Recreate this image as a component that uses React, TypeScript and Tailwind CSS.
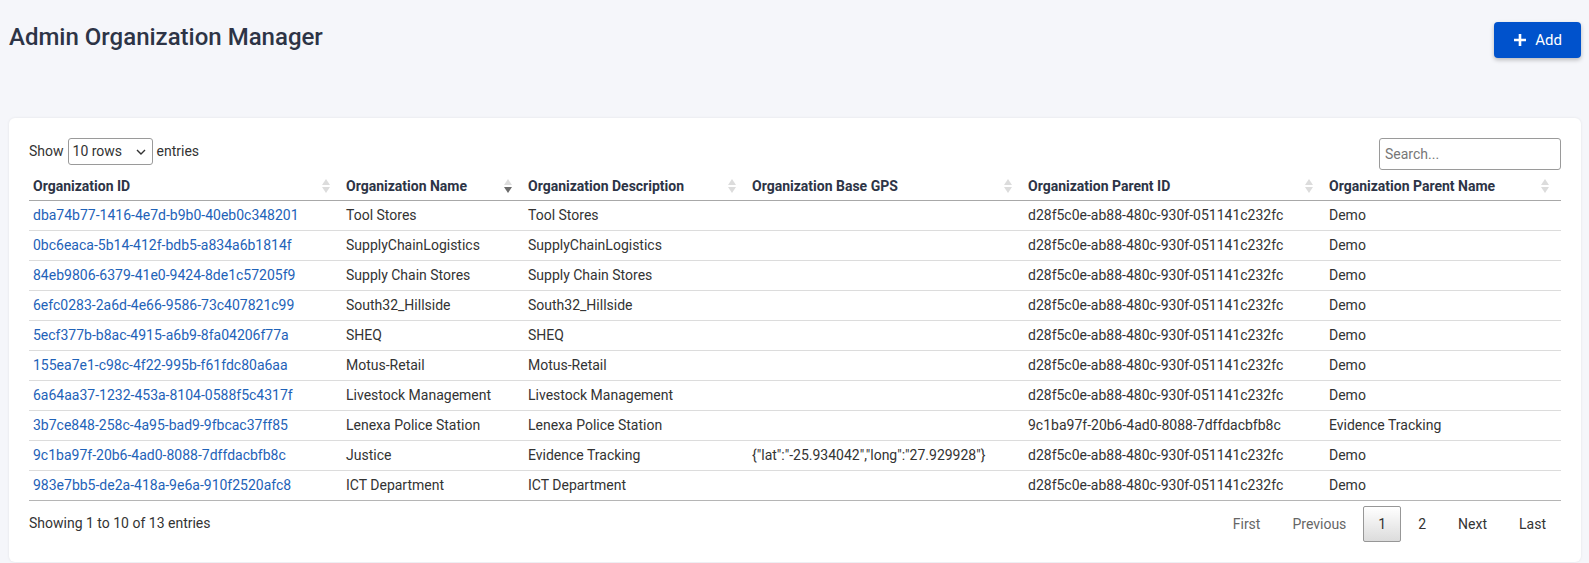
import React from 'react';

type Org = {
  id: string;
  name: string;
  description: string;
  gps: string;
  parentId: string;
  parentName: string;
};

const DEMO = 'd28f5c0e-ab88-480c-930f-051141c232fc';

const orgs: Org[] = [
  { id: 'dba74b77-1416-4e7d-b9b0-40eb0c348201', name: 'Tool Stores', description: 'Tool Stores', gps: '', parentId: DEMO, parentName: 'Demo' },
  { id: '0bc6eaca-5b14-412f-bdb5-a834a6b1814f', name: 'SupplyChainLogistics', description: 'SupplyChainLogistics', gps: '', parentId: DEMO, parentName: 'Demo' },
  { id: '84eb9806-6379-41e0-9424-8de1c57205f9', name: 'Supply Chain Stores', description: 'Supply Chain Stores', gps: '', parentId: DEMO, parentName: 'Demo' },
  { id: '6efc0283-2a6d-4e66-9586-73c407821c99', name: 'South32_Hillside', description: 'South32_Hillside', gps: '', parentId: DEMO, parentName: 'Demo' },
  { id: '5ecf377b-b8ac-4915-a6b9-8fa04206f77a', name: 'SHEQ', description: 'SHEQ', gps: '', parentId: DEMO, parentName: 'Demo' },
  { id: '155ea7e1-c98c-4f22-995b-f61fdc80a6aa', name: 'Motus-Retail', description: 'Motus-Retail', gps: '', parentId: DEMO, parentName: 'Demo' },
  { id: '6a64aa37-1232-453a-8104-0588f5c4317f', name: 'Livestock Management', description: 'Livestock Management', gps: '', parentId: DEMO, parentName: 'Demo' },
  { id: '3b7ce848-258c-4a95-bad9-9fbcac37ff85', name: 'Lenexa Police Station', description: 'Lenexa Police Station', gps: '', parentId: '9c1ba97f-20b6-4ad0-8088-7dffdacbfb8c', parentName: 'Evidence Tracking' },
  { id: '9c1ba97f-20b6-4ad0-8088-7dffdacbfb8c', name: 'Justice', description: 'Evidence Tracking', gps: '{"lat":"-25.934042","long":"27.929928"}', parentId: DEMO, parentName: 'Demo' },
  { id: '983e7bb5-de2a-418a-9e6a-910f2520afc8', name: 'ICT Department', description: 'ICT Department', gps: '', parentId: DEMO, parentName: 'Demo' },
];

const columns = [
  { label: 'Organization ID', width: 'w-[313px]', active: false },
  { label: 'Organization Name', width: 'w-[182px]', active: true },
  { label: 'Organization Description', width: 'w-[224px]', active: false },
  { label: 'Organization Base GPS', width: 'w-[276px]', active: false },
  { label: 'Organization Parent ID', width: 'w-[301px]', active: false },
  { label: 'Organization Parent Name', width: 'w-[236px]', active: false },
];

const SortIcon = ({ active }: { active: boolean }) => (
  <span className="flex flex-col gap-[2px]">
    <span className="w-0 h-0 border-x-[4px] border-x-transparent border-b-[6px] border-b-[#dcdcdc]" />
    <span className={`w-0 h-0 border-x-[4px] border-x-transparent border-t-[6px] ${active ? 'border-t-[#6b6b6b]' : 'border-t-[#dcdcdc]'}`} />
  </span>
);

export default function App() {
  return (
    <div className="min-h-[563px] bg-[#f5f6fa] pl-[9px] pr-[8px] pt-[22px] pb-[2px] text-[14px] text-[#333] font-['Roboto',sans-serif]">
      {/* Header */}
      <div className="flex justify-between items-start h-[96px]">
        <h1 className="text-[24px] font-medium text-[#2d3446] leading-[30px]">Admin Organization Manager</h1>
        <button className="flex items-center gap-[8px] h-[36px] px-[19px] rounded-[4px] bg-[#0052cc] text-white text-[15px] shadow-[0_2px_4px_rgba(0,0,0,0.25)]">
          <svg width="14" height="14" viewBox="0 0 14 14">
            <path d="M7 1v12M1 7h12" stroke="white" strokeWidth="2.6" />
          </svg>
          Add
        </button>
      </div>

      {/* Card */}
      <div className="bg-white rounded-[6px] shadow-[0_0_3px_rgba(0,0,0,0.08)] px-[20px] pt-[20px] pb-[20px]">
        <div className="flex justify-between items-start h-[32px]">
          <div className="flex items-center gap-[4px] h-[27px]">
            <span>Show</span>
            <div className="flex items-center justify-between w-[85px] h-[27px] border border-[#9a9a9a] rounded-[3px] pl-[4px] pr-[6px]">
              <span>10 rows</span>
              <svg width="10" height="6" viewBox="0 0 10 6">
                <path d="M1 1l4 4 4-4" stroke="#333" strokeWidth="1.4" fill="none" />
              </svg>
            </div>
            <span>entries</span>
          </div>
          <div className="w-[182px] h-[32px] border border-[#9a9a9a] rounded-[3px] flex items-center px-[5px] text-[#777]">
            Search...
          </div>
        </div>

        <table className="w-full border-collapse table-fixed">
          <thead>
            <tr className="h-[30px] border-b border-b-[#a8a8a8]">
              {columns.map((c) => (
                <th key={c.label} className={`${c.width} text-left font-bold text-[#2d3446] px-[4px] pt-[3px]`}>
                  <div className="flex items-center justify-between pr-[8px]">
                    <span>{c.label}</span>
                    <SortIcon active={c.active} />
                  </div>
                </th>
              ))}
            </tr>
          </thead>
          <tbody>
            {orgs.map((o, i) => (
              <tr key={o.id} className={`h-[30px] border-b ${i === orgs.length - 1 ? 'border-b-[#b5b5b5]' : 'border-b-[#dcdcdc]'}`}>
                <td className="px-[4px] text-[#1e62b8]">{o.id}</td>
                <td className="px-[4px]">{o.name}</td>
                <td className="px-[4px]">{o.description}</td>
                <td className="px-[4px]">{o.gps}</td>
                <td className="px-[4px]">{o.parentId}</td>
                <td className="px-[4px]">{o.parentName}</td>
              </tr>
            ))}
          </tbody>
        </table>

        <div className="flex justify-between items-center mt-[5px]">
          <span>Showing 1 to 10 of 13 entries</span>
          <div className="flex items-center gap-[2px]">
            <span className="px-[14px] py-[7px] leading-[20px] border border-transparent text-[#666]">First</span>
            <span className="px-[14px] py-[7px] leading-[20px] border border-transparent text-[#666]">Previous</span>
            <span className="px-[14px] py-[7px] leading-[20px] border border-[#979797] rounded-[2px] bg-gradient-to-b from-white to-[#dcdcdc]">1</span>
            <span className="px-[14px] py-[7px] leading-[20px] border border-transparent">2</span>
            <span className="px-[14px] py-[7px] leading-[20px] border border-transparent">Next</span>
            <span className="px-[14px] py-[7px] leading-[20px] border border-transparent">Last</span>
          </div>
        </div>
      </div>
    </div>
  );
}
